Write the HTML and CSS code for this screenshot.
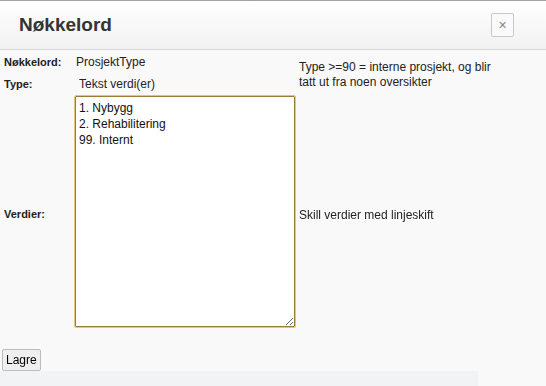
FILE: index.html
```html
<!DOCTYPE html>
<html lang="no">
<head>
  <meta charset="UTF-8" />
  <title>Nøkkelord</title>
  <link rel="stylesheet" href="styles.css">
</head>
<body>
  <div class="header">
    <h1>Nøkkelord</h1>
    <button class="close" title="Lukk">&#x2715;</button>
  </div>

  <div class="form">
    <div class="label">Nøkkelord:</div>
    <div class="value">ProsjektType</div>
    <div class="help help-top">Type &gt;=90 = interne prosjekt, og blir<br>tatt ut fra noen oversikter</div>

    <div class="label">Type:</div>
    <div class="value type">Tekst verdi(er)</div>

    <div class="label label-values">Verdier:</div>
    <div class="value-box"><textarea class="values" autofocus>1. Nybygg
2. Rehabilitering
99. Internt</textarea></div>
    <div class="help help-values">Skill verdier med linjeskift</div>
  </div>

  <button class="save">Lagre</button>
  <div class="footer"></div>
</body>
</html>
```

FILE: styles.css
```css
body { margin: 0; background: #f9f9f9; font-family: "Liberation Sans", Arial, sans-serif; font-size: 12px; color: #222; border-top: 1px solid #a3a3a3; }
.header { height: 48px; display: flex; align-items: center; justify-content: space-between; padding: 0 32px 0 19px; background: linear-gradient(#ffffff, #f1f1f1); border-bottom: 1px solid #d6d6d6; }
.header h1 { margin: 0; font-size: 19px; font-weight: bold; color: #333; }
.close { width: 23px; height: 24px; padding: 0; border: 1px solid #c8c8c8; border-radius: 2px; background: #fafafa; color: #8a8a8a; font-size: 11px; font-weight: bold; font-family: "DejaVu Sans", sans-serif; }

.form { display: grid; grid-template-columns: 72px 225px 1fr; grid-template-rows: 22px 22px auto; margin-top: 1px; }
.label { padding-left: 4px; font-size: 11px; font-weight: bold; align-self: center; }
.label-values { padding-top: 6px; }
.value { padding-left: 4px; align-self: center; }
.value.type { padding-left: 7px; }
.value-box { padding-top: 1px; }
.help { padding-left: 2px; align-self: center; }
.help-values { padding-top: 8px; }
.help-top { grid-row: 1 / span 2; grid-column: 3; align-self: start; padding-top: 9px; line-height: 15px; }

.values { display: block; box-sizing: border-box; width: 220px; height: 231px; margin: 0 0 0 3px; padding: 3px 3px; border: 1px solid #9b7c36; outline: 1px solid #e2c57c; border-radius: 1px; background: #fff; font-family: "Liberation Sans", Arial, sans-serif; font-size: 12px; line-height: 16px; color: #111; }

.save { display: block; margin: 22px 0 0 2px; height: 22px; padding: 0 3px; border: 1px solid #bdbdbd; border-radius: 2px; background: #efefef; font-family: "Liberation Sans", Arial, sans-serif; font-size: 12px; color: #000; }
.footer { width: 478px; height: 20px; background: #f2f3f5; }
```
